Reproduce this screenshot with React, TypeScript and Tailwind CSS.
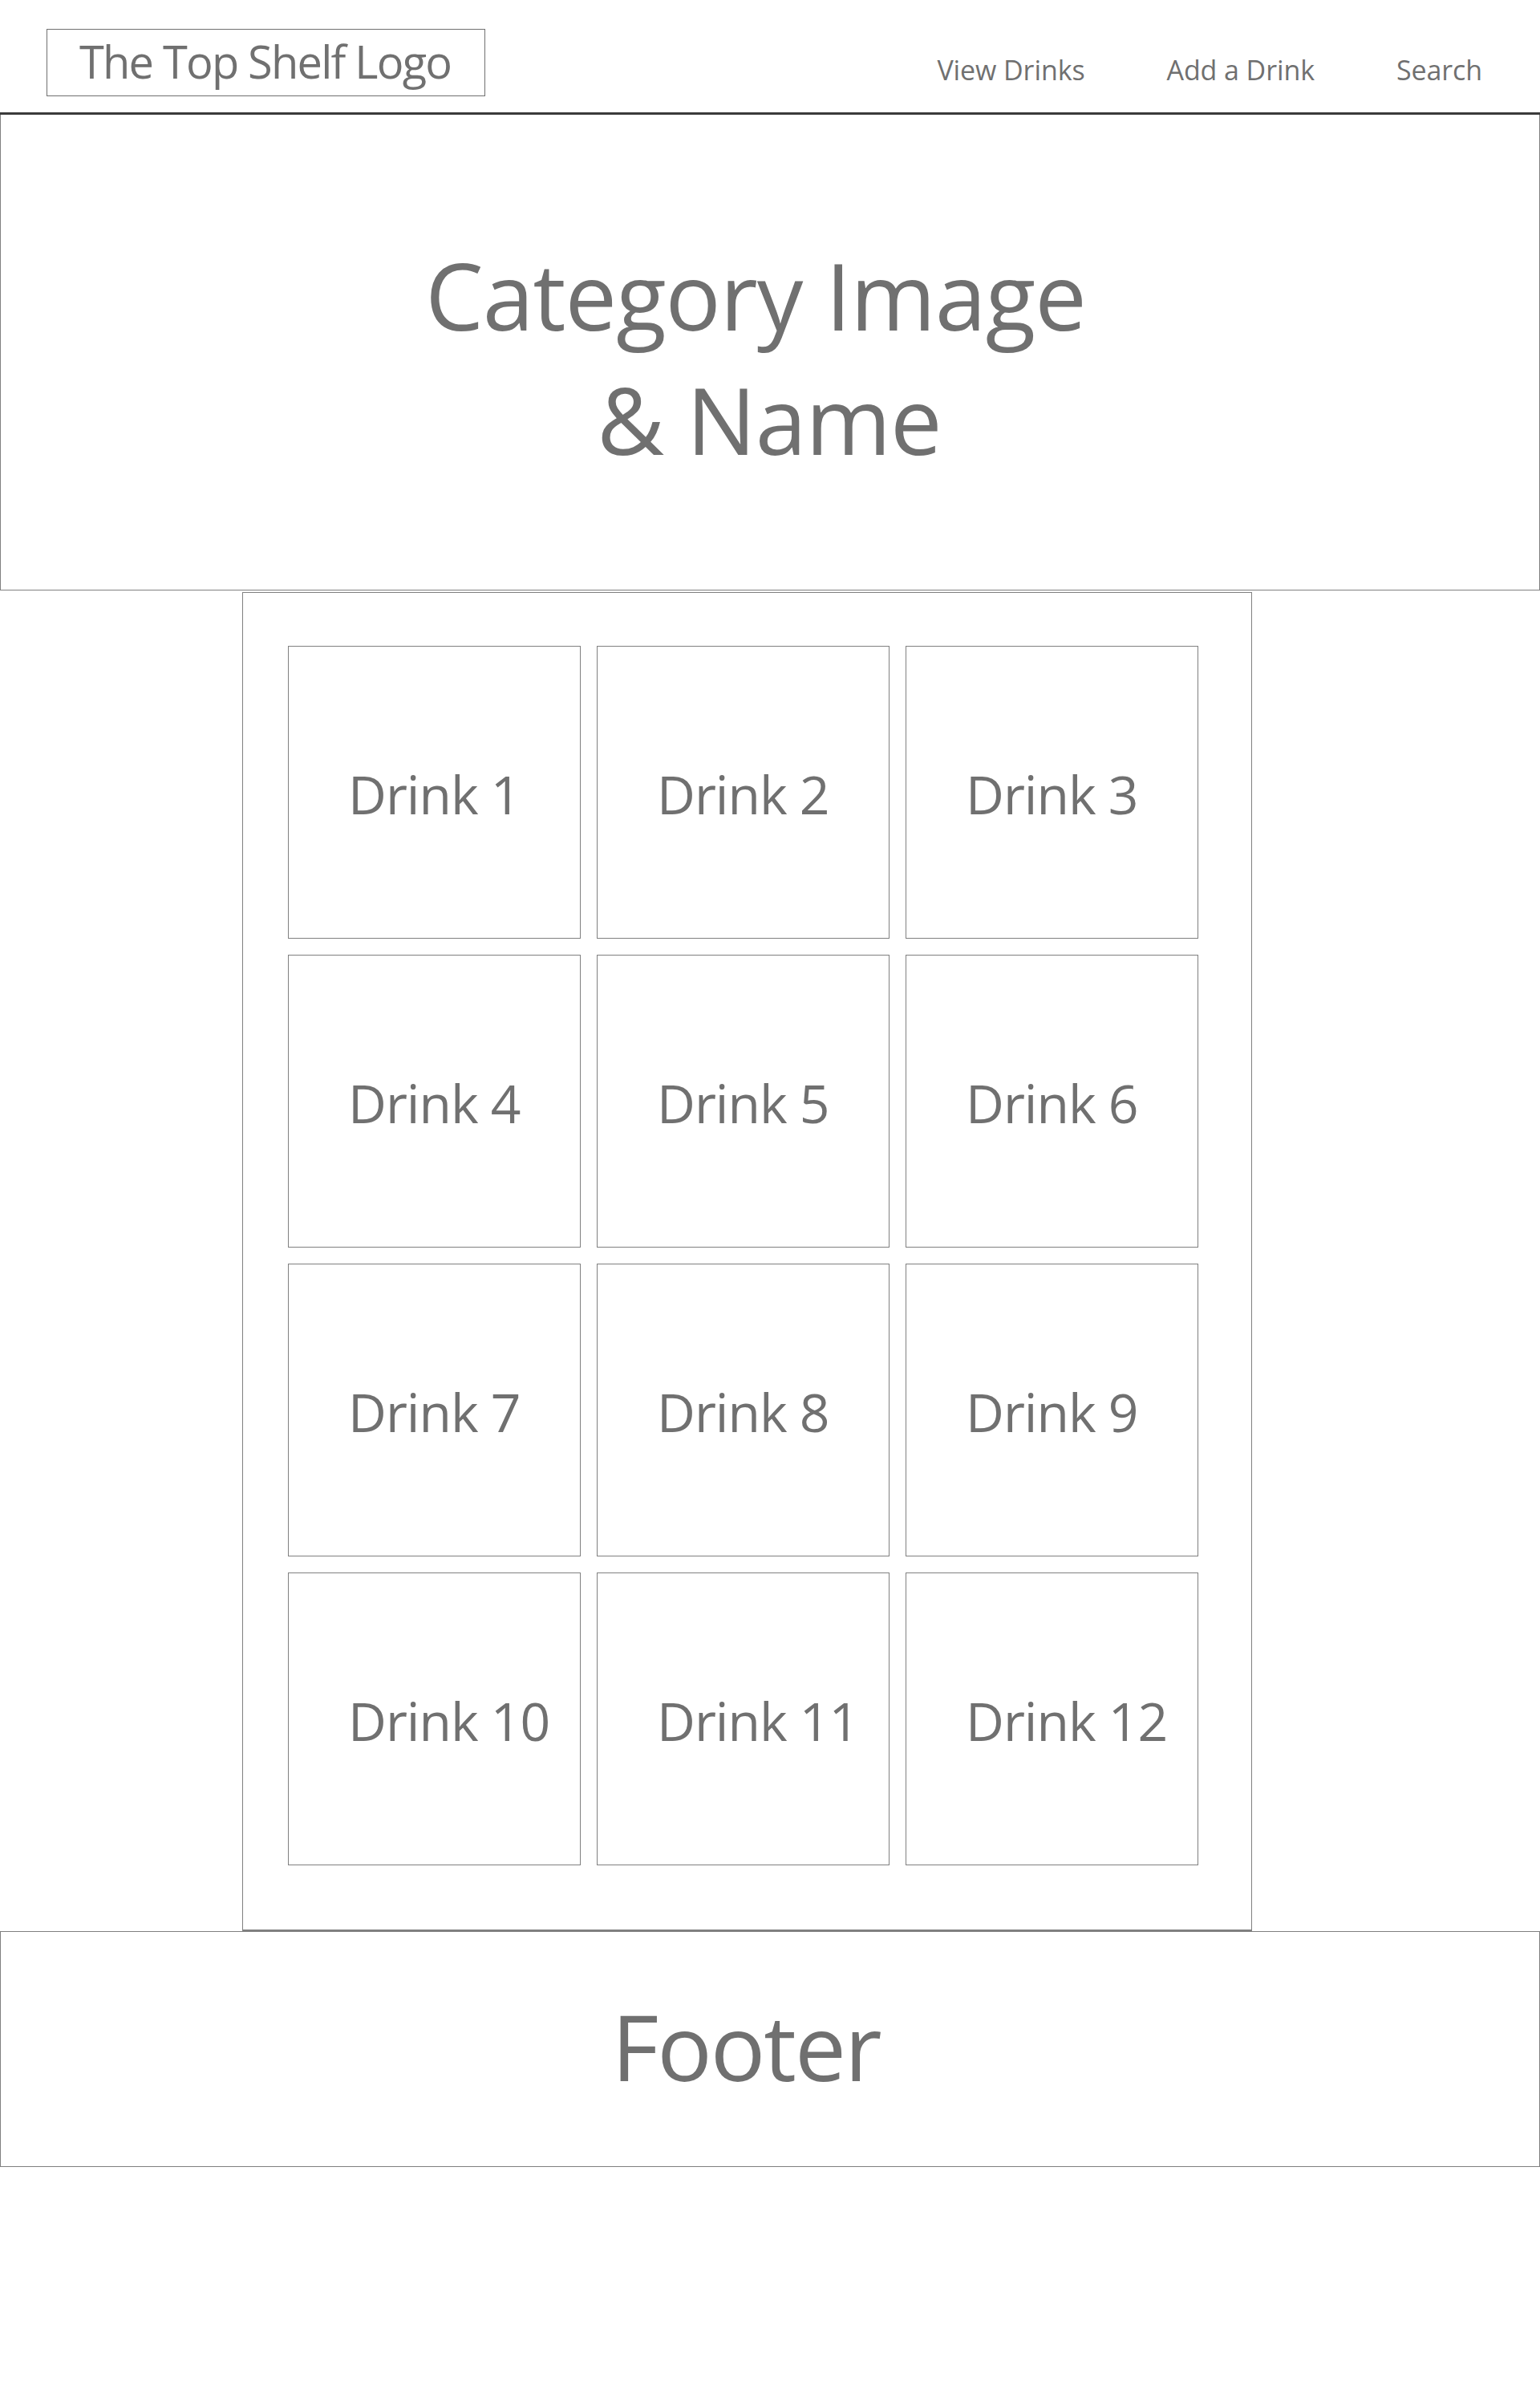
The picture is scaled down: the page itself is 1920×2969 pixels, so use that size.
import React from 'react';

const drinks = Array.from({ length: 12 }, (_, i) => `Drink ${i + 1}`);

function Header() {
  return (
    <header className="flex h-[143px] items-start justify-between border-b-[3px] border-[#3a3a3a] pl-[58px] pr-[72px]">
      <div className="mt-[36px] flex h-[84px] w-[547px] items-center border border-[#707070] pb-[5px] pl-[40px]">
        <span className="text-[56px] leading-none tracking-[-1.8px]">The Top Shelf Logo</span>
      </div>
      <nav className="mt-[70px] flex gap-[102px] text-[34px] leading-none tracking-[-0.1px]">
        <a href="#">View Drinks</a>
        <a href="#">Add a Drink</a>
        <a href="#">Search</a>
      </nav>
    </header>
  );
}

function DrinkCard({ name }: { name: string }) {
  return (
    <div className="flex h-[365px] w-[365px] items-center border border-[#808080] pl-[74px] pt-[2px]">
      <span className="text-[66px] leading-none tracking-[-1px]">{name}</span>
    </div>
  );
}

export default function App() {
  return (
    <div
      className="min-h-[2969px] w-[1920px] bg-white text-[#707070]"
      style={{ fontFamily: '"Open Sans", "Noto Sans", sans-serif' }}
    >
      <Header />

      <section className="flex h-[593px] flex-col items-center justify-center border-x border-b border-[#808080] pt-[12px] pr-[36px] text-[115px] leading-[155px] tracking-[-1px]">
        <div>Category Image</div>
        <div className="pl-[34px]">&amp; Name</div>
      </section>

      <main className="ml-[302px] mt-[2px] h-[1669px] w-[1259px] border border-b-2 border-[#808080] pl-[56px] pt-[66px]">
        <div className="grid grid-cols-[365px_365px_365px] gap-x-[20px] gap-y-[20px]">
          {drinks.map((d) => (
            <DrinkCard key={d} name={d} />
          ))}
        </div>
      </main>

      <footer className="flex h-[294px] items-center justify-center border border-[#808080] pr-[60px] pb-[8px]">
        <span className="text-[114px] leading-none tracking-[-2px]">Footer</span>
      </footer>
    </div>
  );
}
